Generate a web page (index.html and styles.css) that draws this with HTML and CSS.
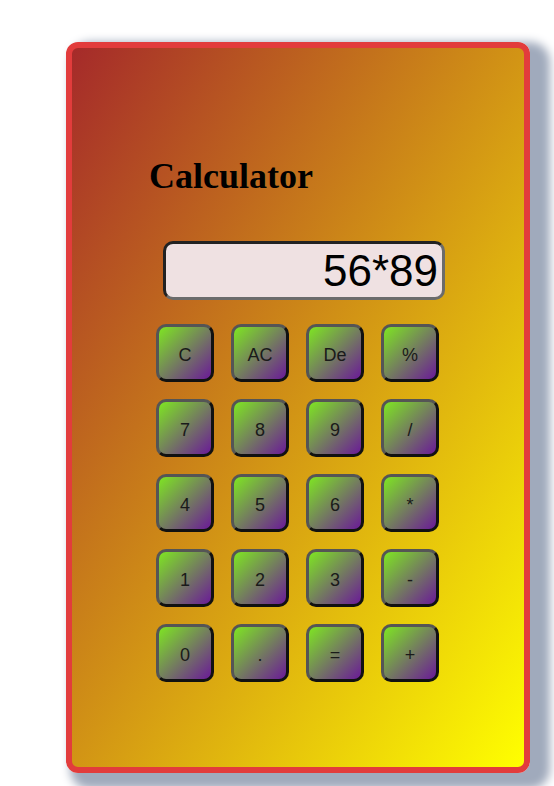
FILE: index.html
```html
<!DOCTYPE html>
<html>
<head>
<meta charset="utf-8">
<title>Calculator</title>
<link rel="stylesheet" href="styles.css">
</head>
<body>
<div class="card">
  <h1 class="title">Calculator</h1>
  <div class="display">56*89</div>
  <div class="keys">
    <button class="key">C</button>
    <button class="key">AC</button>
    <button class="key">De</button>
    <button class="key">%</button>
    <button class="key">7</button>
    <button class="key">8</button>
    <button class="key">9</button>
    <button class="key">/</button>
    <button class="key">4</button>
    <button class="key">5</button>
    <button class="key">6</button>
    <button class="key">*</button>
    <button class="key">1</button>
    <button class="key">2</button>
    <button class="key">3</button>
    <button class="key">-</button>
    <button class="key">0</button>
    <button class="key">.</button>
    <button class="key">=</button>
    <button class="key">+</button>
  </div>
</div>
</body>
</html>
```
FILE: styles.css
```css
html, body {
  margin: 0;
  background: #ffffff;
}
body {
  padding: 42px 0 0 66px;
  height: 786px;
  box-sizing: border-box;
  overflow: hidden;
}
.card {
  box-sizing: border-box;
  width: 464px;
  height: 731px;
  border: 6px solid #e23c3c;
  border-radius: 12px;
  background: linear-gradient(to bottom right, #a52a2a, #ffff00);
  box-shadow: 12px 8px 10px 8px #a0aabc;
  display: flex;
  flex-direction: column;
  align-items: flex-start;
}
.title {
  margin: 108px 0 0 77px;
  font-family: "Liberation Serif", serif;
  font-weight: bold;
  font-size: 36px;
  line-height: 41px;
  color: #000;
}
.display {
  box-sizing: border-box;
  margin: 44px 0 0 91px;
  width: 282px;
  height: 59px;
  border: 3px solid;
  border-color: #222 #6b6b6b #6b6b6b #222;
  border-radius: 10px;
  background: #efe1e2;
  font-family: "Liberation Sans", Arial, sans-serif;
  font-size: 44px;
  line-height: 53px;
  text-align: right;
  padding-right: 4px;
  color: #000;
}
.keys {
  margin: 24px 0 0 84px;
  display: grid;
  grid-template-columns: repeat(4, 58px);
  grid-auto-rows: 58px;
  column-gap: 17px;
  row-gap: 17px;
}
.key {
  box-sizing: border-box;
  width: 58px;
  height: 58px;
  padding: 4px 0 0 0;
  border: 3px solid;
  border-color: #555 #111 #111 #555;
  border-radius: 10px;
  background: linear-gradient(to bottom right, #7ee622, #6a1a98);
  font-family: "Liberation Sans", Arial, sans-serif;
  font-size: 18px;
  color: #1a1a1a;
}
```
